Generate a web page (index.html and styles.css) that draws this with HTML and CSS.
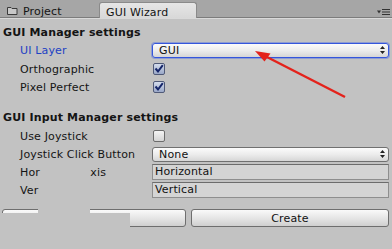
FILE: index.html
```html
<!DOCTYPE html>
<html>
<head>
<meta charset="utf-8">
<link rel="stylesheet" href="styles.css">
</head>
<body>
<div class="window">
  <div class="tabbar">
    <div class="tab project">
      <svg class="folder" width="11" height="8" viewBox="0 0 11 8"><path d="M0.5 0.5h3.5l1 1h5v6h-9.5z" fill="#c8c8c8" stroke="#3a3a3a"/></svg>
      <span>Project</span>
    </div>
    <div class="tab active">GUI Wizard</div>
    <div class="spacer"></div>
    <svg class="menu" width="13" height="6" viewBox="0 0 13 6"><path d="M0 1.5h4l-2 3z" fill="#333"/><rect x="5" y="0" width="8" height="1" fill="#333"/><rect x="5" y="2.5" width="8" height="1" fill="#333"/><rect x="5" y="5" width="8" height="1" fill="#333"/></svg>
  </div>
  <div class="tabline"></div>
  <div class="content">
    <div class="header">GUI Manager settings</div>
    <div class="row popup-row first">
      <span class="label focus">UI Layer</span>
      <div class="popup focused"><span>GUI</span><svg width="5" height="8" viewBox="0 0 5 8"><path d="M2.5 0L5 3H0zM2.5 8L5 5H0z" fill="#222"/></svg></div>
    </div>
    <div class="row">
      <span class="label">Orthographic</span>
      <span class="checkbox checked"><svg width="10" height="10" viewBox="0 0 10 10"><path d="M1.5 4.5L4 7.5L8.8 1.2" fill="none" stroke="#16266a" stroke-width="2"/></svg></span>
    </div>
    <div class="row">
      <span class="label">Pixel Perfect</span>
      <span class="checkbox checked"><svg width="10" height="10" viewBox="0 0 10 10"><path d="M1.5 4.5L4 7.5L8.8 1.2" fill="none" stroke="#16266a" stroke-width="2"/></svg></span>
    </div>
    <div class="header second">GUI Input Manager settings</div>
    <div class="row">
      <span class="label">Use Joystick</span>
      <span class="checkbox"></span>
    </div>
    <div class="row">
      <span class="label">Joystick Click Button</span>
      <div class="popup"><span>None</span><svg width="5" height="8" viewBox="0 0 5 8"><path d="M2.5 0L5 3H0zM2.5 8L5 5H0z" fill="#222"/></svg></div>
    </div>
    <div class="row">
      <span class="label">Hor<span class="masked">izontal A</span>xis</span>
      <div class="field">Horizontal</div>
    </div>
    <div class="row">
      <span class="label">Ver<span class="masked">tical Axis</span></span>
      <div class="field">Vertical</div>
    </div>
    <div class="buttons">
      <button class="btn left"></button>
      <button class="btn create">Create</button>
    </div>
  </div>
  <div class="erase e1"></div>
  <div class="erase e2"></div>
  <div class="erase e3"></div>
  <svg class="arrow" width="392" height="249" viewBox="0 0 392 249"><line x1="345" y1="97" x2="265" y2="56" stroke="#e4221b" stroke-width="2.4"/><path d="M255 51L270.5 53.5L264.5 61.5z" fill="#e4221b"/></svg>
</div>
</body>
</html>
```
FILE: styles.css
```css
body {
  margin: 0;
  background: #c2c2c2;
  font-family: "DejaVu Sans", Verdana, sans-serif;
  font-size: 11px;
  letter-spacing: 0.15px;
  color: #111;
}
.window {
  position: relative;
  width: 392px;
  height: 249px;
  overflow: hidden;
}
.tabbar {
  display: flex;
  align-items: flex-end;
  height: 17px;
  background: #a6a6a6;
  border-bottom: 1px solid #7c7c7c;
}
.tabline {
  height: 1px;
  background: #d9d9d9;
}
.tab {
  box-sizing: border-box;
  height: 16px;
  display: flex;
  align-items: center;
  padding-top: 4px;
  color: #141414;
}
.tab.project {
  width: 99px;
  padding-left: 7px;
  gap: 5px;
}
.folder {
  margin-top: -1px;
}
.tab.active {
  width: 98px;
  height: 16px;
  margin-bottom: -1px;
  padding-left: 6px;
  padding-top: 3px;
  background: linear-gradient(#e6e6e6, #d8d8d8);
  border: 1px solid #8a8a8a;
  border-bottom: none;
  border-radius: 3px 3px 0 0;
}
.spacer {
  flex: 1;
}
.menu {
  align-self: center;
  margin: 6px 2px 0 0;
}
.content {
  padding: 5px 3px 0 3px;
}
.header {
  font-weight: bold;
  height: 18px;
  line-height: 18px;
  color: #141414;
}
.header.second {
  margin-top: 13px;
}
.row {
  display: flex;
  align-items: center;
  height: 18px;
}
.row.first {
  height: 16px;
  margin-bottom: 2px;
}
.label {
  box-sizing: border-box;
  width: 149px;
  flex: none;
  padding-left: 17px;
  white-space: nowrap;
  color: #141414;
}
.label.focus {
  color: #2141c4;
}
.masked {
  color: transparent;
  letter-spacing: 0.3px;
}
.popup {
  box-sizing: border-box;
  flex: 1;
  height: 15px;
  display: flex;
  align-items: center;
  justify-content: space-between;
  padding: 0 3px 0 6px;
  border: 1px solid #707070;
  border-radius: 3px;
  background: linear-gradient(#fbfbfb, #ececec 50%, #d6d6d6);
  color: #111;
}
.popup.focused {
  border-color: #3556dc;
  box-shadow: 0 0 0 1px rgba(80, 110, 230, 0.45);
}
.checkbox {
  box-sizing: border-box;
  width: 12px;
  height: 12px;
  margin-left: 1px;
  border: 1px solid #6c6c6c;
  border-radius: 2px;
  background: linear-gradient(#f4f4f4, #d4d4d4);
  display: flex;
  align-items: center;
  justify-content: center;
}
.checkbox.checked {
  border-color: #505a78;
  background: linear-gradient(#d4dcec, #9aa8c8);
}
.field {
  box-sizing: border-box;
  flex: 1;
  height: 16px;
  padding: 0 2px;
  line-height: 14px;
  background: #d4d4d4;
  border: 1px solid #8e8e8e;
  border-top-color: #6c6c6c;
  color: #111;
}
.buttons {
  display: flex;
  gap: 5px;
  margin-top: 10px;
  margin-left: -1px;
}
.btn {
  box-sizing: border-box;
  height: 18px;
  border: 1px solid #6e6e6e;
  border-radius: 3px;
  background: linear-gradient(#fafafa, #e6e6e6 50%, #cfcfcf);
  font-family: "DejaVu Sans", Verdana, sans-serif;
  font-size: 11px;
  letter-spacing: 0.15px;
  color: #111;
  padding: 0;
}
.btn.left {
  width: 184px;
}
.btn.create {
  width: 198px;
}
.erase {
  position: absolute;
  background: #c2c2c2;
}
.e1 {
  left: 0;
  top: 213px;
  width: 130px;
  height: 20px;
}
.e2 {
  left: 38px;
  top: 205px;
  width: 52px;
  height: 10px;
}
.e3 {
  left: 90px;
  top: 214px;
  width: 40px;
  height: 16px;
}
.arrow {
  position: absolute;
  left: 0;
  top: 0;
  pointer-events: none;
}
```
